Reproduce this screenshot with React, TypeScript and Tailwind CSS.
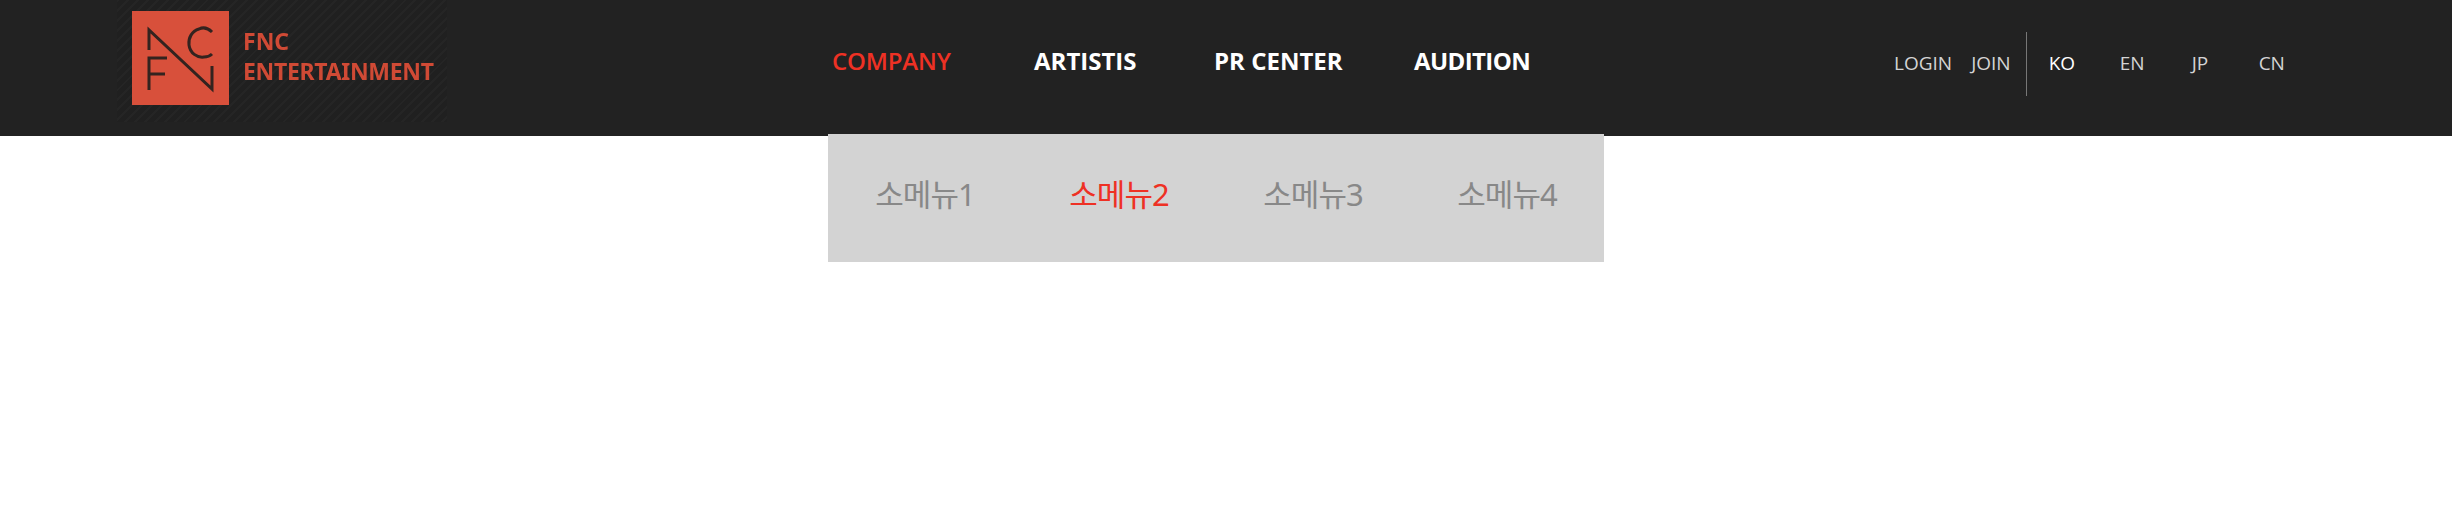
export default function App() {
  const nav = [
    { t: "COMPANY", c: "text-[#ee3124] font-semibold tracking-[-0.15px] w-[202px]" },
    { t: "ARTISTIS", c: "text-white font-bold w-[180px]" },
    { t: "PR CENTER", c: "text-white font-bold w-[200px]" },
    { t: "AUDITION", c: "text-white font-bold tracking-[-0.6px] w-[130px]" },
  ];
  const subs = ["소메뉴1", "소메뉴2", "소메뉴3", "소메뉴4"];
  return (
    <div className="min-h-[518px] bg-white font-['Noto_Sans','Noto_Sans_CJK_KR',sans-serif]">
      <header className="flex h-[136px] items-start bg-[#222222]">
        <div className="ml-[117px] flex h-[122px] w-[330px] items-start bg-[repeating-linear-gradient(135deg,#252525_0px,#252525_2px,#202020_2px,#202020_7px)] pl-[15px] pt-[11px]">
          <svg width="97" height="94" viewBox="0 0 97 94" className="shrink-0 blur-[0.4px]">
            <rect width="97" height="94" fill="#d8503b" />
            <g fill="none" stroke="#33231f" strokeWidth="3">
              <path d="M17 39V19L80 78V55" />
              <path d="M80 21C76 17 71 16 67 18C60 20 56 27 57 34C58 42 65 47 72 46C75 46 78 45 80 43" />
              <path d="M17 79V47H35M17 63H33" />
            </g>
          </svg>
          <div className="ml-[14px] mt-[15px] text-[23px] font-bold leading-[30px] text-[#d04a35] blur-[0.6px]">
            <div>FNC</div>
            <div className="tracking-[-0.3px]">ENTERTAINMENT</div>
          </div>
        </div>
        <nav className="ml-[385px] flex h-[122px] pt-[41px] font-['Open_Sans',sans-serif]">
          {nav.map((n) => (
            <a key={n.t} className={`text-[24px] leading-[40px] whitespace-nowrap ${n.c}`}>
              {n.t}
            </a>
          ))}
        </nav>
        <div className="ml-[350px] mt-[32px] flex h-[64px] items-center font-['Open_Sans',sans-serif] text-[19px] text-[#d4d4d4]">
          <a className="-mt-[2px]">LOGIN</a>
          <a className="-mt-[2px] ml-[19px]">JOIN</a>
          <div className="ml-[15px] h-[64px] w-px bg-[#777777]" />
          <a className="-mt-[2px] ml-[22px] w-[71px] text-white">KO</a>
          <a className="-mt-[2px] w-[72px]">EN</a>
          <a className="-mt-[2px] w-[67px]">JP</a>
          <a className="-mt-[2px]">CN</a>
        </div>
      </header>
      <div className="relative -mt-[2px] ml-[828px] flex h-[128px] w-[776px] bg-[#d3d3d3] pb-[8px]">
        {subs.map((s, i) => (
          <a
            key={s}
            className={`flex flex-1 items-center justify-center text-[31px] tracking-[-1px] ${
              i === 1 ? "text-[#ee3124]" : "text-[#888888]"
            }`}
          >
            {s}
          </a>
        ))}
      </div>
    </div>
  );
}
